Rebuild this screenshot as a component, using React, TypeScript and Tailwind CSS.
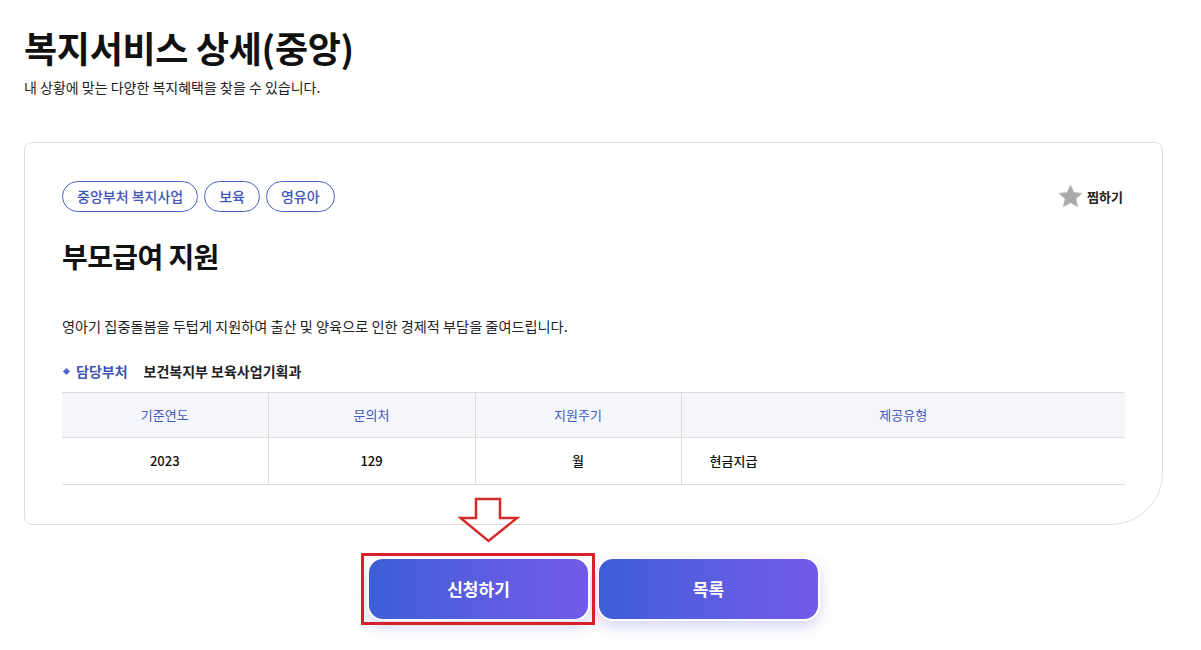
import React from "react";

const font = { fontFamily: '"Noto Sans CJK KR", "Noto Sans", sans-serif' };

const tags = ["중앙부처 복지사업", "보육", "영유아"];
const heads = ["기준연도", "문의처", "지원주기", "제공유형"];

export default function App() {
  return (
    <div className="relative w-[1201px] h-[650px] bg-white text-[#111]" style={font}>
      <div className="pl-6 pt-[24px]">
        {/* Title */}
        <h1 className="text-[36px] font-bold leading-[46px] tracking-[-0.3px]">복지서비스 상세(중앙)</h1>
        <p className="mt-[7px] text-[14px] leading-[20px] text-[#222]">
          내 상황에 맞는 다양한 복지혜택을 찾을 수 있습니다.
        </p>

        {/* Card */}
        <div className="mt-[45px] w-[1139px] h-[383px] border border-[#dedede] rounded-tl-lg rounded-tr-lg rounded-bl-lg rounded-br-[52px] px-[37px] pt-[38px]">
          <div className="flex items-center justify-between">
            <div className="flex gap-[6px]">
              {tags.map((t) => (
                <span
                  key={t}
                  className="h-[31px] px-[14px] flex items-center rounded-full border border-[#4d63c4] text-[14px] font-medium text-[#3f55b8]"
                >
                  {t}
                </span>
              ))}
            </div>
            <button className="flex items-center gap-[3px] mr-[2px] text-[13px] font-bold text-[#222]">
              <svg width="27" height="27" viewBox="0 0 24 24">
                <path
                  d="M12 1.8l3.1 6.6 7.1.8-5.3 4.9 1.5 7.1L12 17.6l-6.4 3.6 1.5-7.1L1.8 9.2l7.1-.8z"
                  fill="#a9a9a9"
                  stroke="#bdbdbd"
                  strokeWidth="0.6"
                  strokeLinejoin="round"
                />
              </svg>
              찜하기
            </button>
          </div>

          <h2 className="mt-[26px] text-[28px] font-bold leading-[36px] tracking-[-0.6px]">부모급여 지원</h2>

          <p className="mt-[41px] text-[14.2px] leading-[22px] text-[#222]">
            영아기 집중돌봄을 두텁게 지원하여 출산 및 양육으로 인한 경제적 부담을 줄여드립니다.
          </p>

          <div className="mt-[23px] flex items-center text-[14px] font-bold leading-[22px]">
            <span className="w-[5px] h-[5px] bg-[#4d63c4] rotate-45 ml-[2px] mr-[7px]" />
            <span className="text-[#3f55b8]">담당부처</span>
            <span className="ml-[16px] text-[#222]">보건복지부 보육사업기획과</span>
          </div>

          {/* Table */}
          <table className="mt-[10px] w-full table-fixed border-collapse text-[13px]">
            <colgroup>
              <col className="w-[206px]" />
              <col className="w-[207px]" />
              <col className="w-[206px]" />
              <col />
            </colgroup>
            <thead>
              <tr className="bg-[#f5f6fa] border-t border-b border-[#dcdcdc]">
                {heads.map((h, i) => (
                  <th
                    key={h}
                    className={`h-[45px] font-normal text-[#4158c0] ${i < 3 ? "border-r border-[#dcdcdc]" : ""}`}
                  >
                    {h}
                  </th>
                ))}
              </tr>
            </thead>
            <tbody>
              <tr className="border-b border-[#dcdcdc] font-medium text-[#111]">
                <td className="h-[47px] text-center border-r border-[#dcdcdc]">2023</td>
                <td className="text-center border-r border-[#dcdcdc]">129</td>
                <td className="text-center border-r border-[#dcdcdc]">월</td>
                <td className="pl-[28px]">현금지급</td>
              </tr>
            </tbody>
          </table>
        </div>

        {/* Buttons */}
        <div className="mt-[32px] flex justify-center gap-[7px] w-[1139px]">
          <button className="w-[223px] h-[64px] rounded-[16px] border-2 border-white bg-gradient-to-r from-[#3b5fd6] to-[#735ae9] text-white text-[17px] font-bold shadow-[0_6px_14px_rgba(90,90,220,0.25)]">
            신청하기
          </button>
          <button className="w-[223px] h-[64px] rounded-[16px] border-2 border-white bg-gradient-to-r from-[#3b5fd6] to-[#735ae9] text-white text-[17px] font-bold shadow-[0_6px_14px_rgba(90,90,220,0.25)]">
            목록
          </button>
        </div>
      </div>

      {/* Annotation overlays */}
      <svg className="absolute left-[458px] top-[497px]" width="62" height="47" viewBox="0 0 62 47">
        <path d="M18 2h24v19h17L30.5 44 2.5 21H18z" fill="none" stroke="#d62b2b" strokeWidth="2.5" />
      </svg>
      <div className="absolute left-[361px] top-[553px] w-[234px] h-[72px] border-[3px] border-[#d8202a]" />
    </div>
  );
}
